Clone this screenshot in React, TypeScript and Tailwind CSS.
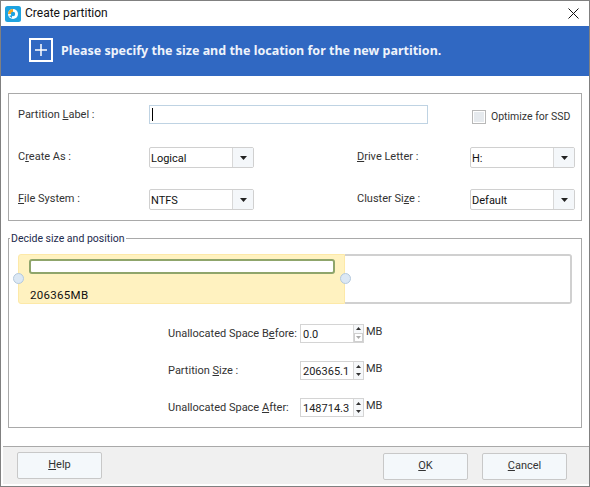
import React from 'react';

const Combo = ({ value }: { value: string }) => (
  <div className="w-[105px] h-[21px] flex border border-[#d0d0d0] rounded-[2px] bg-white text-[11px] text-[#111]">
    <div className="flex-1 pl-[1px] leading-[21px]">{value}</div>
    <div className="w-[21px] border-l border-[#d8d8d8] bg-[#f4f7fa] flex items-center justify-center">
      <svg width="7" height="4" viewBox="0 0 7 4"><path d="M0 0h7L3.5 4z" fill="#222" /></svg>
    </div>
  </div>
);

const Spinner = ({ value, label, disabled }: { value: string; label: React.ReactNode; disabled?: boolean }) => (
  <div className="flex items-start h-[19px]">
    <div className="w-[132px] whitespace-nowrap leading-[19px]">{label}</div>
    <div className="w-[64px] h-[19px] flex border border-[#d4d4d4] bg-white">
      <div className="flex-1 pl-[2px] text-[11px] leading-[19px] text-[#222]">{value}</div>
      <div className="w-[10px] border-l border-[#d8d8d8] flex flex-col">
        <div className="flex-1 flex items-center justify-center bg-[#f6f8fa]">
          <svg width="5" height="3" viewBox="0 0 5 3"><path d="M2.5 0L5 3H0z" fill="#333" /></svg>
        </div>
        <div className={`flex-1 flex items-center justify-center ${disabled ? 'border border-[#cfcfcf]' : 'bg-[#f6f8fa]'}`}>
          <svg width="5" height="3" viewBox="0 0 5 3"><path d="M0 0h5L2.5 3z" fill={disabled ? '#aaa' : '#333'} /></svg>
        </div>
      </div>
    </div>
    <div className="ml-[2px] text-[11px] leading-[15px]">MB</div>
  </div>
);

const Button = ({ children }: { children: React.ReactNode }) => (
  <button className="w-[85px] h-[27px] border border-[#c8c8c8] rounded-[2px] bg-[#f4f8fb] text-[11px] text-[#333]">
    {children}
  </button>
);

const Handle = ({ className }: { className: string }) => (
  <div className={`absolute top-[19px] w-[11px] h-[11px] rounded-full bg-[#dce8f4] border border-[#b4c9dd] ${className}`} />
);

export default function App() {
  return (
    <div className="w-[590px] h-[487px] flex flex-col bg-white border border-[#808080] overflow-hidden font-['Roboto',sans-serif]">
      {/* Title bar */}
      <div className="h-[25px] flex items-center shrink-0">
        <svg className="ml-[4px]" width="16" height="16" viewBox="0 0 16 16">
          <rect width="16" height="16" rx="2.5" fill="#1ea3e0" />
          <circle cx="8" cy="8" r="5" fill="#fff" />
          <path d="M8 3a5 5 0 0 0-5 5h5z" fill="#f5a623" />
          <circle cx="8" cy="8" r="2.2" fill="#1ea3e0" />
          <path d="M4 10l3-1v3z" fill="#1ea3e0" />
        </svg>
        <span className="ml-[4px] mb-[1px] text-[12px] text-[#111]">Create partition</span>
        <svg className="ml-auto mr-[10px]" width="11" height="11" viewBox="0 0 11 11">
          <path d="M0.5 0.5l10 10M10.5 0.5l-10 10" stroke="#111" strokeWidth="1" fill="none" />
        </svg>
      </div>

      {/* Blue header */}
      <div className="h-[50px] shrink-0 bg-[#3068c2] flex items-center pl-[28px]">
        <div className="w-[24px] h-[24px] mb-[3px] border-2 border-white flex items-center justify-center">
          <svg width="12" height="12" viewBox="0 0 12 12"><path d="M6 0v12M0 6h12" stroke="#fff" strokeWidth="1.5" /></svg>
        </div>
        <span className="ml-[8px] text-[12.5px] font-bold text-[#eef3fb] font-['Noto_Sans',sans-serif]">
          Please specify the size and the location for the new partition.
        </span>
      </div>

      <div className="flex-1 flex flex-col pl-[7px] pr-[7px] pt-[17px] text-[11px] text-[#333]">
        {/* Partition settings */}
        <div className="h-[128px] shrink-0 border border-[#a9a9a9] pl-[9px] pt-[11px]">
          <div className="flex h-[19px] items-center">
            <div className="w-[131px] mt-[1px]">Partition <u>L</u>abel :</div>
            <div className="w-[279px] h-[19px] border border-[#bfd3e3] flex items-center pl-[2px]">
              <div className="w-px h-[13px] bg-black" />
            </div>
            <div className="ml-[44px] w-[14px] h-[14px] border border-[#b8b8b8] p-[1px] mt-[5px]">
              <div className="w-full h-full bg-[#e6eaee]" />
            </div>
            <div className="ml-[5px] mt-[5px] text-[10.5px] whitespace-nowrap">Optimize for SSD</div>
          </div>
          <div className="flex items-center mt-[23px]">
            <div className="w-[131px]">C<u>r</u>eate As :</div>
            <Combo value="Logical" />
            <div className="ml-[103px] w-[113px]"><u>D</u>rive Letter :</div>
            <Combo value="H:" />
          </div>
          <div className="flex items-center mt-[21px]">
            <div className="w-[131px]"><u>F</u>ile System :</div>
            <Combo value="NTFS" />
            <div className="ml-[103px] w-[113px]">Cluster Si<u>z</u>e :</div>
            <Combo value="Default" />
          </div>
        </div>

        {/* Size and position */}
        <div className="relative h-[190px] shrink-0 mt-[17px] border border-[#a9a9a9] pl-[9px] pt-[15px]">
          <span className="absolute left-[1px] top-[-8px] bg-white px-[1px] text-[10.5px] leading-[16px] text-[#1d2a4d]">Decide size and position</span>
          <div className="relative flex h-[50px] w-[554px]">
            <div className="w-[327px] bg-[#fff2c0] border border-[#fde9a8] rounded-l-[3px] pl-[10px] pt-[4px]">
              <div className="w-[306px] h-[15px] bg-white border-2 border-[#8fa56b] rounded-[3px]" />
              <div className="ml-[1px] mt-[14px] text-[11.5px] leading-[14px] text-[#111] tracking-[0.3px]">206365MB</div>
            </div>
            <div className="flex-1 bg-white border-2 border-l-0 border-[#d0d0d0] rounded-r-[3px]" />
            <Handle className="left-[-5px]" />
            <Handle className="left-[322px]" />
          </div>
          <div className="ml-[150px] mt-[20px] flex flex-col gap-[18px]">
            <Spinner value="0.0" disabled label={<>Unallocated Space B<u>e</u>fore:</>} />
            <Spinner value="206365.1" label={<>Partition <u>S</u>ize :</>} />
            <Spinner value="148714.3" label={<>Unallocated Space <u>A</u>fter:</>} />
          </div>
        </div>
      </div>

      {/* Footer */}
      <div className="h-[38px] shrink-0 ml-[2px] mb-[2px] border-t border-[#a9a9a9] bg-[#f0f0f0] flex items-start pt-[5px] pl-[14px] pr-[22px]">
        <Button><u>H</u>elp</Button>
        <div className="ml-auto"><Button><u>O</u>K</Button></div>
        <div className="ml-[14px]"><Button><u>C</u>ancel</Button></div>
      </div>
    </div>
  );
}
